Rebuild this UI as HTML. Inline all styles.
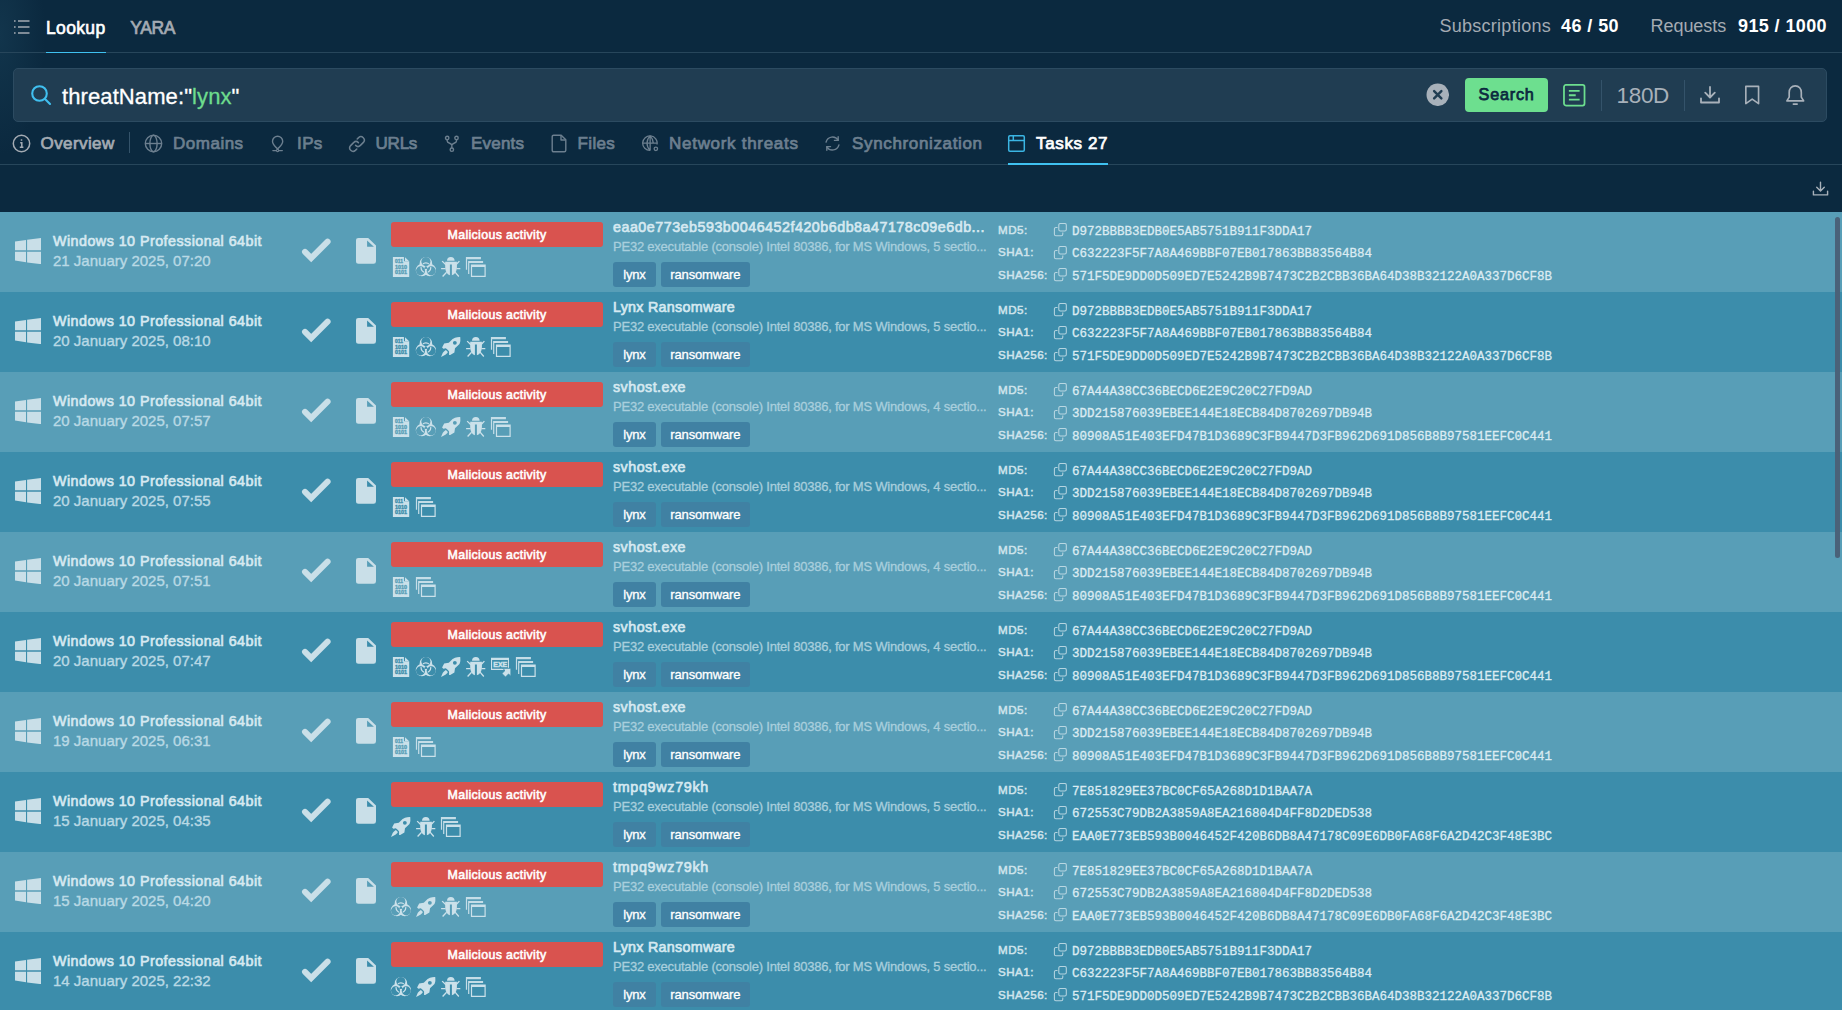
<!DOCTYPE html>
<html lang="en">
<head>
<meta charset="utf-8">
<title>Lookup</title>
<style>
*{box-sizing:border-box;margin:0;padding:0}
html,body{width:1842px;height:1010px;overflow:hidden;background:#0b293f;font-family:"Liberation Sans",sans-serif;color:#fff}
body{position:relative}
.abs{position:absolute}
/* top nav */
.nav{position:absolute;left:0;top:0;width:1842px;height:53px;border-bottom:1px solid #27465b}
.glow{position:absolute;left:0;top:0;width:80px;height:200px;background:radial-gradient(ellipse 45px 120px at 0 35px,#12354c 0,rgba(18,53,76,0) 100%)}
.nav .t{position:absolute;top:16.900px;font-size:17.500px;line-height:22px;white-space:nowrap}
.nav .lookup{left:46px;color:#fff;-webkit-text-stroke:.62px #fff;letter-spacing:0.346px}
.nav .yara{left:130.200px;color:#a4abb3;-webkit-text-stroke:.7px #a4abb3;letter-spacing:-0.340px}
.nav .ul{position:absolute;left:46px;top:51.600px;width:60px;height:1.500px;background:#3fc1f0}
.nav .r{position:absolute;top:15px;font-size:18px;line-height:22px;white-space:nowrap;color:#a4abb3}
.nav .r b{color:#fff;font-weight:bold}
/* search */
.sb{position:absolute;left:13px;top:68px;width:1814px;height:54px;background:#203d52;border:1px solid #2c4b61;border-radius:5px}
.sb .q{position:absolute;left:48px;top:13px;font-size:22px;line-height:30px;white-space:nowrap;color:#fff;-webkit-text-stroke:.3px currentColor;letter-spacing:.1px}
.sb .q span{color:#6ddc8d}
.btn{position:absolute;left:1451.300px;top:9.400px;width:82.500px;height:33.400px;border-radius:4px;background:#6ddf8f;color:#0b293f;font-size:16.2px;line-height:33.400px;text-align:center;-webkit-text-stroke:.75px #0b293f;letter-spacing:0.784px}
.sep{position:absolute;top:11px;width:1px;height:31px;background:#34536a}
.d180{position:absolute;left:1602.500px;top:12px;font-size:22.500px;line-height:30px;color:#a8b1ba;letter-spacing:-0.324px}
/* tabs */
.tabs{position:absolute;left:0;top:122px;width:1842px;height:43px;border-bottom:1px solid #27465b}
.tab{position:absolute;top:11px;font-size:17px;line-height:22px;color:#6c7f8f;-webkit-text-stroke:.72px currentColor;white-space:nowrap}
.tab.on{color:#fff}
.tabs svg{position:absolute}
.tul{position:absolute;left:1008px;top:41px;width:100px;height:2px;background:#3fc1f0}
/* rows */
.list{position:absolute;left:0;top:212px;width:1842px;height:798px;overflow:hidden}
.row{position:relative;height:80px;width:1842px;background:#589eb7;--bg:#589eb7}
.row.alt{background:#3c8dab;--bg:#3c8dab}
.row>*{position:absolute}
.wl{left:14.900px;top:26px;width:26.200px;height:26.200px}
.os{left:53px;top:19px;font-size:14.3px;line-height:20px;color:#d6e9f1;-webkit-text-stroke:.65px currentColor;letter-spacing:0.466px;white-space:nowrap}
.dt{left:53px;top:39px;font-size:15px;line-height:20px;color:#b9d9e5;-webkit-text-stroke:.38px currentColor;white-space:nowrap}
.ck{left:301px;top:25px;width:31px;height:27px}
.fl{left:356px;top:26.100px;width:20px;height:25.700px}
.verdict{left:391px;top:10px;width:212px;height:25px;border-radius:3px;background:#d9534f;color:#fff;font-size:12.4px;line-height:26.500px;-webkit-text-stroke:.55px currentColor;letter-spacing:0.335px;text-align:center}
.sis{left:391px;top:44px;height:21px;display:flex;gap:5px;align-items:flex-start}
.si{width:20px;height:21px;display:block;flex:none;overflow:visible}
.nm{left:613px;top:5px;font-size:14.3px;line-height:20px;color:#d6e9f1;-webkit-text-stroke:.65px currentColor;white-space:nowrap}
.ds{left:613px;top:27px;font-size:13px;line-height:16px;color:#a9cfdd;-webkit-text-stroke:.3px currentColor;white-space:nowrap}
.tags{left:613px;top:50px;display:flex;gap:5px}
.tag.t1{width:43px}.tag.t2{width:88.600px}
.tag{display:block;height:25px;border-radius:3px;background:#4081a3;color:#fff;font-size:13px;line-height:25px;text-align:center;-webkit-text-stroke:.3px #fff;white-space:nowrap}
.hl{left:998px;font-size:11.600px;line-height:16px;color:#cfe4ec;-webkit-text-stroke:.5px currentColor;letter-spacing:0.485px;white-space:nowrap}
.hc{left:1053px;width:15px;height:14px}
.cp{width:15px;height:14px;display:block;opacity:.85}
.hv{left:1072px;font-family:"Liberation Mono",monospace;font-size:12.5px;line-height:16px;color:#dbebf2;-webkit-text-stroke:.3px currentColor;white-space:nowrap}
.hl.h1{top:10px}.hl.h2{top:32.300px}.hl.h3{top:55.300px}
.hc.h1{top:10.500px}.hc.h2{top:33.500px}.hc.h3{top:56px}
.hv.h1{top:11.750px}.hv.h2{top:33.750px}.hv.h3{top:56.750px}
.scroll{position:absolute;left:1835px;top:217px;width:5px;height:341px;border-radius:3px;background:#4a6279}
</style>
</head>
<body>
<div class="glow"></div>
<div class="nav">
<svg class="abs" style="left:13px;top:19px" width="18" height="16" viewBox="0 0 18 16"><g stroke="#a4abb3" stroke-width="1.400" fill="none"><path d="M5 2h11.500M5 8h11.500M5 14h11.500"/><path d="M1 2h1.600M1 8h1.600M1 14h1.600"/></g></svg>
<div class="t lookup">Lookup</div>
<div class="t yara">YARA</div>
<div class="ul"></div>
<div class="r" style="left:1439.500px;letter-spacing:0.264px">Subscriptions</div>
<div class="r" style="left:1561px"><b style="letter-spacing:0.422px">46 / 50</b></div>
<div class="r" style="left:1650.500px;letter-spacing:-0.043px">Requests</div>
<div class="r" style="left:1738px"><b style="letter-spacing:0.392px">915 / 1000</b></div>
</div>

<div class="sb">
<svg class="abs" style="left:15.500px;top:15px" width="23" height="23" viewBox="0 0 23 23"><g fill="none" stroke="#40bfef" stroke-width="2.100" stroke-linecap="round"><circle cx="9.500" cy="9.500" r="7.300"/><path d="M15 15l5 5"/></g></svg>
<div class="q">threatName:"<span>lynx</span>"</div>
<svg class="abs" style="left:1411.800px;top:13.800px" width="23.500" height="23.500" viewBox="0 0 24 24"><circle cx="12" cy="12" r="11.500" fill="#a8b1ba"/><path d="M8.300 8.300l7.400 7.400M15.700 8.300l-7.400 7.400" stroke="#203d52" stroke-width="2.500" stroke-linecap="round"/></svg>
<div class="btn">Search</div>
<svg class="abs" style="left:1549px;top:15px" width="22.500" height="22.500" viewBox="0 0 23 23"><g fill="none" stroke="#6ddf8f" stroke-width="1.800"><rect x="1" y="1" width="21" height="21" rx="2"/><path d="M6 7h11M6 11.500h7M6 16h11"/></g></svg>
<div class="sep" style="left:1587px"></div>
<div class="d180">180D</div>
<div class="sep" style="left:1670px"></div>
<svg class="abs" style="left:1685.300px;top:15px" width="22" height="22" viewBox="0 0 22 22"><g fill="none" stroke="#a8b1ba" stroke-width="1.800" stroke-linecap="round" stroke-linejoin="round"><path d="M11 3v10M6.200 8.700l4.800 4.800 4.800-4.800M2 14.300v4.200h18v-4.200"/></g></svg>
<svg class="abs" style="left:1730.300px;top:16px" width="16.400" height="20" viewBox="0 0 18 22"><path fill="none" stroke="#a8b1ba" stroke-width="1.800" stroke-linejoin="round" d="M2 1.500h14v19l-7-5-7 5z"/></svg>
<svg class="abs" style="left:1771.300px;top:15.200px" width="20.500" height="22.500" viewBox="0 0 22 24"><g fill="none" stroke="#a8b1ba" stroke-width="1.800" stroke-linecap="round" stroke-linejoin="round"><path d="M11 2c-4 0-6.500 3-6.500 7v5L2 18h18l-2.500-4V9c0-4-2.500-7-6.500-7z"/><path d="M9 21.500h4"/></g></svg>
</div>

<div class="tabs">
<svg style="left:12px;top:12px" width="19" height="19" viewBox="0 0 19 19"><circle cx="9.500" cy="9.500" r="8.200" fill="none" stroke="#a4abb3" stroke-width="1.500"/><path d="M9.500 5.300v1.500M8.200 8.700h1.600v4.300M7.800 13.200h3.600" fill="none" stroke="#a4abb3" stroke-width="1.500"/></svg>
<div class="tab" style="left:40.600px;color:#a4abb3;letter-spacing:0.393px">Overview</div>
<div class="sep" style="left:129px;top:9.700px;height:21px"></div>
<svg style="left:144px;top:12px" width="19" height="19" viewBox="0 0 19 19"><g fill="none" stroke="#6c7f8f" stroke-width="1.400"><circle cx="9.500" cy="9.500" r="8.200"/><ellipse cx="9.500" cy="9.500" rx="3.600" ry="8.200"/><path d="M1.300 9.500h16.400"/></g></svg>
<div class="tab" style="left:173.100px;letter-spacing:0.487px">Domains</div>
<svg style="left:270px;top:13px" width="16" height="18" viewBox="0 0 16 18"><g fill="none" stroke="#6c7f8f" stroke-width="1.400" stroke-linecap="round"><path d="M7.600 14.200C5.600 11.700 2.500 9.600 2.500 6.300a5.100 5.100 0 0 1 10.200 0c0 3.300-3.100 5.400-5.100 7.900z"/><path d="M2.900 15.600h9.400"/><circle cx="7.600" cy="15.500" r="1.100" fill="#0b293f" stroke-width="1.100"/></g></svg>
<div class="tab" style="left:297.100px;letter-spacing:0.312px">IPs</div>
<svg style="left:348px;top:13px" width="18" height="18" viewBox="0 0 18 18"><g fill="none" stroke="#6c7f8f" stroke-width="1.500" stroke-linecap="round"><path d="M7.600 10.400a3.400 3.400 0 0 0 4.800 0l3-3a3.400 3.400 0 0 0-4.800-4.800l-1.400 1.400"/><path d="M10.400 7.600a3.400 3.400 0 0 0-4.800 0l-3 3a3.400 3.400 0 0 0 4.800 4.800l1.400-1.400"/></g></svg>
<div class="tab" style="left:375.600px;letter-spacing:-0.254px">URLs</div>
<svg style="left:444px;top:13px" width="16" height="18" viewBox="0 0 16 18"><g fill="none" stroke="#6c7f8f" stroke-width="1.400"><circle cx="3.200" cy="3" r="1.700"/><circle cx="12.500" cy="3" r="1.700"/><circle cx="7.850" cy="14.700" r="1.700"/><path d="M3.200 4.700v1.300c0 2.700 4.650 1.800 4.650 4.200V13M12.500 4.700v1.300c0 2.700-4.650 1.800-4.650 4.200"/></g></svg>
<div class="tab" style="left:471.100px;letter-spacing:0.169px">Events</div>
<svg style="left:551px;top:12px" width="17" height="19" viewBox="0 0 17 19"><g fill="none" stroke="#6c7f8f" stroke-width="1.400" stroke-linejoin="round"><path d="M2.700 1.200h7.500l4.600 4.600v10.500c0 .9-.6 1.500-1.500 1.500H2.700c-.9 0-1.500-.6-1.500-1.500V2.700c0-.9.600-1.500 1.500-1.500z"/><path d="M10 1.400v4.600h4.600"/></g></svg>
<div class="tab" style="left:577.600px;letter-spacing:0.319px">Files</div>
<svg style="left:642.100px;top:13.300px" width="17.200" height="17.200" viewBox="0 0 19 19"><g fill="none" stroke="#6c7f8f" stroke-width="1.450"><path d="M16.600 10.500A8 8 0 1 0 9 17"/><path d="M9 1c-4.600 4.500-4.600 11.500 0 16M9 1c2.300 2.300 3.400 5 3.500 8M1 9h15.500M9 1v16"/><circle cx="15.300" cy="15.300" r="1.900"/></g></svg>
<div class="tab" style="left:669.100px;letter-spacing:0.697px">Network threats</div>
<svg style="left:823.600px;top:13.300px;transform:scaleX(-1)" width="17" height="17" viewBox="0 0 18 18"><g fill="none" stroke="#6c7f8f" stroke-width="1.500" stroke-linecap="round" stroke-linejoin="round"><path d="M15.800 7.500A7 7 0 0 0 3 5.500M2.200 10.500A7 7 0 0 0 15 12.500"/><path d="M3 1.800v3.900h3.900M15 16.200v-3.900h-3.900"/></g></svg>
<div class="tab" style="left:852.100px;letter-spacing:0.635px">Synchronization</div>
<svg style="left:1007px;top:12px" width="19" height="19" viewBox="0 0 19 19"><g fill="none" stroke="#3bb5e3" stroke-width="1.500"><rect x="1.700" y="1.700" width="15.600" height="15.600" rx="1.200"/><path d="M1.700 6.500h15.600M6.300 1.700v4.800"/></g></svg>
<div class="tab on" style="left:1036.100px;letter-spacing:0.613px">Tasks 27</div>
<div class="tul"></div>
</div>

<svg class="abs" style="left:1811.500px;top:180.500px" width="17" height="15.500" viewBox="0 0 18 16"><g fill="none" stroke="#a8b1ba" stroke-width="1.500" stroke-linecap="round" stroke-linejoin="round"><path d="M9 1v9M5 6.500l4 4 4-4M1.500 10.500v4h15v-4"/></g></svg>

<div class="list">
<div class="row">
<svg class="wl" viewBox="0 0 26.200 26.200"><path fill="#c9dfe8" d="M0 3.400L11 1.900v10.400H0zM12.100 1.700L26.200 0v12.300H12.100zM0 13.700h11v10.500L0 22.600zM12.100 13.700h14.100v12.500l-14.100-1.800z"/></svg><div class="os">Windows 10 Professional 64bit</div><div class="dt">21 January 2025, 07:20</div>
<svg class="ck" viewBox="0 0 31 27"><path fill="none" stroke="#c9dfe8" stroke-width="6" stroke-linecap="round" stroke-linejoin="miter" d="M4 14.860l6.200 6.200L26.600 4.660"/></svg><svg class="fl" viewBox="0 0 20 25.700"><path fill="#c9dfe8" fill-rule="evenodd" d="M2.500 0h9.700L20 7.600v15.600a2.500 2.500 0 0 1-2.500 2.500h-15A2.500 2.500 0 0 1 0 23.200V2.500A2.500 2.500 0 0 1 2.500 0zM11.100 2.500v6.300h6.800z"/></svg>
<div class="verdict">Malicious activity</div>
<div class="sis"><svg class="si" viewBox="0 0 20 21"><path fill="#cbe1ea" d="M1.900 1h11v4.300h5.300v15.800H1.900z"/><path fill="#cbe1ea" d="M14 1.300l3.900 3.700H14z"/><g font-family="Liberation Sans,sans-serif" font-weight="bold" font-size="5.200" style="fill:var(--bg);stroke:var(--bg)" stroke-width=".35"><text x="3.900" y="7.400" textLength="8.100" lengthAdjust="spacingAndGlyphs">011</text><text x="3.900" y="12.900" textLength="12.200" lengthAdjust="spacingAndGlyphs">1010</text><text x="3.900" y="18.300" textLength="12.200" lengthAdjust="spacingAndGlyphs">0101</text></g></svg><svg class="si" viewBox="0 0 20 21"><g transform="translate(9.900 11.750) scale(.413)"><mask id="u1" maskUnits="userSpaceOnUse" x="-30" y="-30" width="60" height="60"><rect x="-30" y="-30" width="60" height="60" fill="#fff"/><g fill="#000"><circle cx="0.00" cy="-15.00" r="11"/><circle cx="-12.99" cy="7.50" r="11"/><circle cx="12.99" cy="7.50" r="11"/><circle r="3.200"/><rect x="-.8" y="-16" width="1.600" height="16" transform="rotate(0)"/><rect x="-.8" y="-16" width="1.600" height="16" transform="rotate(120)"/><rect x="-.8" y="-16" width="1.600" height="16" transform="rotate(240)"/></g></mask><clipPath id="u2"><circle cx="0.00" cy="-15.00" r="9.300"/><circle cx="-12.99" cy="7.50" r="9.300"/><circle cx="12.99" cy="7.50" r="9.300"/></clipPath><g fill="#cbe1ea" mask="url(#u1)"><circle cx="0.00" cy="-11.00" r="15"/><circle cx="-9.53" cy="5.50" r="15"/><circle cx="9.53" cy="5.50" r="15"/></g><circle r="11.750" fill="none" stroke="#cbe1ea" stroke-width="3" clip-path="url(#u2)"/></g></svg><svg class="si" viewBox="0 0 20 21"><path fill="#cbe1ea" d="M6 4.700a3.800 3.800 0 0 1 7.600 0z"/><path fill="#cbe1ea" d="M4.200 5.800h11.700V11c0 4-1.900 7.500-5 8.200V8.600h-2v10.600C6 18.500 4.200 15 4.200 11z"/><path fill="none" stroke="#cbe1ea" stroke-width="1.300" d="M4.900 8.800L1.150 5.100M14.900 8.800l3.500-3.700M4.500 12.700H.1M15.500 12.700h3.800M5.600 16.200l-4 4.300M14.100 16.200l3.700 4.300"/></svg><svg class="si" viewBox="0 0 20 21"><path fill="#cbe1ea" d="M-.1 1h15v2.300H1.100v10.500H-.1z" opacity=".95"/><path fill="#cbe1ea" d="M2.100 4.900h15v2.200H3.300v10.800H2.100z" opacity=".95"/><path fill="#cbe1ea" fill-rule="evenodd" d="M4.900 8.600h14.800V21H4.900zM6.100 11v8.800h12.400V11z"/></svg></div>
<div class="nm" style="letter-spacing:0.499px">eaa0e773eb593b0046452f420b6db8a47178c09e6db...</div>
<div class="ds" style="letter-spacing:-0.220px">PE32 executable (console) Intel 80386, for MS Windows, 5 sectio...</div>
<div class="tags"><span class="tag t1" style="letter-spacing:-0.181px">lynx</span><span class="tag t2" style="letter-spacing:-0.163px">ransomware</span></div>
<div class="hl h1">MD5:</div><div class="hl h2">SHA1:</div><div class="hl h3">SHA256:</div>
<div class="hc h1"><svg class="cp" viewBox="0 0 15 14"><g fill="none" stroke="#cbe1ea" stroke-width="1.050"><rect x="5.800" y=".5" width="7.500" height="7.500" rx="1.500"/><path d="M4.500 4.400H2.900c-.8 0-1.500.7-1.500 1.500v5.400c0 .8.700 1.500 1.500 1.500h5.400c.8 0 1.500-.7 1.500-1.500V9.400"/></g></svg></div><div class="hc h2"><svg class="cp" viewBox="0 0 15 14"><g fill="none" stroke="#cbe1ea" stroke-width="1.050"><rect x="5.800" y=".5" width="7.500" height="7.500" rx="1.500"/><path d="M4.500 4.400H2.900c-.8 0-1.500.7-1.500 1.500v5.400c0 .8.700 1.500 1.500 1.500h5.400c.8 0 1.500-.7 1.500-1.500V9.400"/></g></svg></div><div class="hc h3"><svg class="cp" viewBox="0 0 15 14"><g fill="none" stroke="#cbe1ea" stroke-width="1.050"><rect x="5.800" y=".5" width="7.500" height="7.500" rx="1.500"/><path d="M4.500 4.400H2.900c-.8 0-1.500.7-1.500 1.500v5.400c0 .8.700 1.500 1.500 1.500h5.400c.8 0 1.500-.7 1.500-1.500V9.400"/></g></svg></div>
<div class="hv h1">D972BBBB3EDB0E5AB5751B911F3DDA17</div><div class="hv h2">C632223F5F7A8A469BBF07EB017863BB83564B84</div><div class="hv h3">571F5DE9DD0D509ED7E5242B9B7473C2B2CBB36BA64D38B32122A0A337D6CF8B</div>
</div>
<div class="row alt">
<svg class="wl" viewBox="0 0 26.200 26.200"><path fill="#c9dfe8" d="M0 3.400L11 1.900v10.400H0zM12.100 1.700L26.200 0v12.300H12.100zM0 13.700h11v10.500L0 22.600zM12.100 13.700h14.100v12.500l-14.100-1.800z"/></svg><div class="os">Windows 10 Professional 64bit</div><div class="dt">20 January 2025, 08:10</div>
<svg class="ck" viewBox="0 0 31 27"><path fill="none" stroke="#c9dfe8" stroke-width="6" stroke-linecap="round" stroke-linejoin="miter" d="M4 14.860l6.200 6.200L26.600 4.660"/></svg><svg class="fl" viewBox="0 0 20 25.700"><path fill="#c9dfe8" fill-rule="evenodd" d="M2.500 0h9.700L20 7.600v15.600a2.500 2.500 0 0 1-2.500 2.500h-15A2.500 2.500 0 0 1 0 23.200V2.500A2.500 2.500 0 0 1 2.500 0zM11.100 2.500v6.300h6.800z"/></svg>
<div class="verdict">Malicious activity</div>
<div class="sis"><svg class="si" viewBox="0 0 20 21"><path fill="#cbe1ea" d="M1.900 1h11v4.300h5.300v15.800H1.900z"/><path fill="#cbe1ea" d="M14 1.300l3.900 3.700H14z"/><g font-family="Liberation Sans,sans-serif" font-weight="bold" font-size="5.200" style="fill:var(--bg);stroke:var(--bg)" stroke-width=".35"><text x="3.900" y="7.400" textLength="8.100" lengthAdjust="spacingAndGlyphs">011</text><text x="3.900" y="12.900" textLength="12.200" lengthAdjust="spacingAndGlyphs">1010</text><text x="3.900" y="18.300" textLength="12.200" lengthAdjust="spacingAndGlyphs">0101</text></g></svg><svg class="si" viewBox="0 0 20 21"><g transform="translate(9.900 11.750) scale(.413)"><mask id="u3" maskUnits="userSpaceOnUse" x="-30" y="-30" width="60" height="60"><rect x="-30" y="-30" width="60" height="60" fill="#fff"/><g fill="#000"><circle cx="0.00" cy="-15.00" r="11"/><circle cx="-12.99" cy="7.50" r="11"/><circle cx="12.99" cy="7.50" r="11"/><circle r="3.200"/><rect x="-.8" y="-16" width="1.600" height="16" transform="rotate(0)"/><rect x="-.8" y="-16" width="1.600" height="16" transform="rotate(120)"/><rect x="-.8" y="-16" width="1.600" height="16" transform="rotate(240)"/></g></mask><clipPath id="u4"><circle cx="0.00" cy="-15.00" r="9.300"/><circle cx="-12.99" cy="7.50" r="9.300"/><circle cx="12.99" cy="7.50" r="9.300"/></clipPath><g fill="#cbe1ea" mask="url(#u3)"><circle cx="0.00" cy="-11.00" r="15"/><circle cx="-9.53" cy="5.50" r="15"/><circle cx="9.53" cy="5.50" r="15"/></g><circle r="11.750" fill="none" stroke="#cbe1ea" stroke-width="3" clip-path="url(#u4)"/></g></svg><svg class="si" viewBox="0 0 20 21"><path fill="#cbe1ea" fill-rule="evenodd" d="M19.200 1.050C17.500 1 15.500 1.200 14 1.640 13 2 12.300 2.500 11.600 3.100L7.770 6.840l-4.600.6L1.090 11.440 2.400 12.800l2.400-.6 2.100 1.900 1.170 1.500v3.300l1.180.1 4.150-2.500.6-4.200 4.500-4.400c.7-1.400 1-3.400.85-4.500.05-.9-.05-1.700-.15-2.350zM15.790 6.840a1.930 1.930 0 1 0-3.860 0 1.930 1.930 0 1 0 3.860 0z"/><path fill="#cbe1ea" d="M4.900 13.900C3.500 14.800 2.300 16 1.700 17L.05 20.950 3.900 19c1.100-.7 2.300-1.800 3-3z"/></svg><svg class="si" viewBox="0 0 20 21"><path fill="#cbe1ea" d="M6 4.700a3.800 3.800 0 0 1 7.600 0z"/><path fill="#cbe1ea" d="M4.200 5.800h11.700V11c0 4-1.900 7.500-5 8.200V8.600h-2v10.600C6 18.500 4.200 15 4.200 11z"/><path fill="none" stroke="#cbe1ea" stroke-width="1.300" d="M4.900 8.800L1.150 5.100M14.900 8.800l3.500-3.700M4.500 12.700H.1M15.500 12.700h3.800M5.600 16.200l-4 4.300M14.100 16.200l3.700 4.300"/></svg><svg class="si" viewBox="0 0 20 21"><path fill="#cbe1ea" d="M-.1 1h15v2.300H1.100v10.500H-.1z" opacity=".95"/><path fill="#cbe1ea" d="M2.100 4.900h15v2.200H3.300v10.800H2.100z" opacity=".95"/><path fill="#cbe1ea" fill-rule="evenodd" d="M4.900 8.600h14.800V21H4.900zM6.100 11v8.800h12.400V11z"/></svg></div>
<div class="nm" style="letter-spacing:0.275px">Lynx Ransomware</div>
<div class="ds" style="letter-spacing:-0.220px">PE32 executable (console) Intel 80386, for MS Windows, 5 sectio...</div>
<div class="tags"><span class="tag t1" style="letter-spacing:-0.181px">lynx</span><span class="tag t2" style="letter-spacing:-0.163px">ransomware</span></div>
<div class="hl h1">MD5:</div><div class="hl h2">SHA1:</div><div class="hl h3">SHA256:</div>
<div class="hc h1"><svg class="cp" viewBox="0 0 15 14"><g fill="none" stroke="#cbe1ea" stroke-width="1.050"><rect x="5.800" y=".5" width="7.500" height="7.500" rx="1.500"/><path d="M4.500 4.400H2.900c-.8 0-1.500.7-1.500 1.500v5.400c0 .8.700 1.500 1.500 1.500h5.400c.8 0 1.500-.7 1.500-1.500V9.400"/></g></svg></div><div class="hc h2"><svg class="cp" viewBox="0 0 15 14"><g fill="none" stroke="#cbe1ea" stroke-width="1.050"><rect x="5.800" y=".5" width="7.500" height="7.500" rx="1.500"/><path d="M4.500 4.400H2.900c-.8 0-1.500.7-1.500 1.500v5.400c0 .8.700 1.500 1.500 1.500h5.400c.8 0 1.500-.7 1.500-1.500V9.400"/></g></svg></div><div class="hc h3"><svg class="cp" viewBox="0 0 15 14"><g fill="none" stroke="#cbe1ea" stroke-width="1.050"><rect x="5.800" y=".5" width="7.500" height="7.500" rx="1.500"/><path d="M4.500 4.400H2.900c-.8 0-1.500.7-1.500 1.500v5.400c0 .8.700 1.500 1.500 1.500h5.400c.8 0 1.500-.7 1.500-1.500V9.400"/></g></svg></div>
<div class="hv h1">D972BBBB3EDB0E5AB5751B911F3DDA17</div><div class="hv h2">C632223F5F7A8A469BBF07EB017863BB83564B84</div><div class="hv h3">571F5DE9DD0D509ED7E5242B9B7473C2B2CBB36BA64D38B32122A0A337D6CF8B</div>
</div>
<div class="row">
<svg class="wl" viewBox="0 0 26.200 26.200"><path fill="#c9dfe8" d="M0 3.400L11 1.900v10.400H0zM12.100 1.700L26.200 0v12.300H12.100zM0 13.700h11v10.500L0 22.600zM12.100 13.700h14.100v12.500l-14.100-1.800z"/></svg><div class="os">Windows 10 Professional 64bit</div><div class="dt">20 January 2025, 07:57</div>
<svg class="ck" viewBox="0 0 31 27"><path fill="none" stroke="#c9dfe8" stroke-width="6" stroke-linecap="round" stroke-linejoin="miter" d="M4 14.860l6.200 6.200L26.600 4.660"/></svg><svg class="fl" viewBox="0 0 20 25.700"><path fill="#c9dfe8" fill-rule="evenodd" d="M2.500 0h9.700L20 7.600v15.600a2.500 2.500 0 0 1-2.500 2.500h-15A2.500 2.500 0 0 1 0 23.200V2.500A2.500 2.500 0 0 1 2.500 0zM11.100 2.500v6.300h6.800z"/></svg>
<div class="verdict">Malicious activity</div>
<div class="sis"><svg class="si" viewBox="0 0 20 21"><path fill="#cbe1ea" d="M1.900 1h11v4.300h5.300v15.800H1.900z"/><path fill="#cbe1ea" d="M14 1.300l3.900 3.700H14z"/><g font-family="Liberation Sans,sans-serif" font-weight="bold" font-size="5.200" style="fill:var(--bg);stroke:var(--bg)" stroke-width=".35"><text x="3.900" y="7.400" textLength="8.100" lengthAdjust="spacingAndGlyphs">011</text><text x="3.900" y="12.900" textLength="12.200" lengthAdjust="spacingAndGlyphs">1010</text><text x="3.900" y="18.300" textLength="12.200" lengthAdjust="spacingAndGlyphs">0101</text></g></svg><svg class="si" viewBox="0 0 20 21"><g transform="translate(9.900 11.750) scale(.413)"><mask id="u5" maskUnits="userSpaceOnUse" x="-30" y="-30" width="60" height="60"><rect x="-30" y="-30" width="60" height="60" fill="#fff"/><g fill="#000"><circle cx="0.00" cy="-15.00" r="11"/><circle cx="-12.99" cy="7.50" r="11"/><circle cx="12.99" cy="7.50" r="11"/><circle r="3.200"/><rect x="-.8" y="-16" width="1.600" height="16" transform="rotate(0)"/><rect x="-.8" y="-16" width="1.600" height="16" transform="rotate(120)"/><rect x="-.8" y="-16" width="1.600" height="16" transform="rotate(240)"/></g></mask><clipPath id="u6"><circle cx="0.00" cy="-15.00" r="9.300"/><circle cx="-12.99" cy="7.50" r="9.300"/><circle cx="12.99" cy="7.50" r="9.300"/></clipPath><g fill="#cbe1ea" mask="url(#u5)"><circle cx="0.00" cy="-11.00" r="15"/><circle cx="-9.53" cy="5.50" r="15"/><circle cx="9.53" cy="5.50" r="15"/></g><circle r="11.750" fill="none" stroke="#cbe1ea" stroke-width="3" clip-path="url(#u6)"/></g></svg><svg class="si" viewBox="0 0 20 21"><path fill="#cbe1ea" fill-rule="evenodd" d="M19.200 1.050C17.500 1 15.500 1.200 14 1.640 13 2 12.300 2.500 11.600 3.100L7.770 6.840l-4.600.6L1.090 11.440 2.400 12.800l2.400-.6 2.100 1.900 1.170 1.500v3.300l1.180.1 4.150-2.500.6-4.200 4.500-4.400c.7-1.400 1-3.400.85-4.500.05-.9-.05-1.700-.15-2.350zM15.790 6.840a1.930 1.930 0 1 0-3.860 0 1.930 1.930 0 1 0 3.860 0z"/><path fill="#cbe1ea" d="M4.900 13.900C3.500 14.800 2.300 16 1.700 17L.05 20.950 3.900 19c1.100-.7 2.300-1.800 3-3z"/></svg><svg class="si" viewBox="0 0 20 21"><path fill="#cbe1ea" d="M6 4.700a3.800 3.800 0 0 1 7.600 0z"/><path fill="#cbe1ea" d="M4.200 5.800h11.700V11c0 4-1.900 7.500-5 8.200V8.600h-2v10.600C6 18.500 4.200 15 4.200 11z"/><path fill="none" stroke="#cbe1ea" stroke-width="1.300" d="M4.900 8.800L1.150 5.100M14.900 8.800l3.500-3.700M4.500 12.700H.1M15.500 12.700h3.800M5.600 16.200l-4 4.300M14.100 16.200l3.700 4.300"/></svg><svg class="si" viewBox="0 0 20 21"><path fill="#cbe1ea" d="M-.1 1h15v2.300H1.100v10.500H-.1z" opacity=".95"/><path fill="#cbe1ea" d="M2.100 4.900h15v2.200H3.300v10.800H2.100z" opacity=".95"/><path fill="#cbe1ea" fill-rule="evenodd" d="M4.900 8.600h14.800V21H4.900zM6.100 11v8.800h12.400V11z"/></svg></div>
<div class="nm" style="letter-spacing:0.466px">svhost.exe</div>
<div class="ds" style="letter-spacing:-0.220px">PE32 executable (console) Intel 80386, for MS Windows, 4 sectio...</div>
<div class="tags"><span class="tag t1" style="letter-spacing:-0.181px">lynx</span><span class="tag t2" style="letter-spacing:-0.163px">ransomware</span></div>
<div class="hl h1">MD5:</div><div class="hl h2">SHA1:</div><div class="hl h3">SHA256:</div>
<div class="hc h1"><svg class="cp" viewBox="0 0 15 14"><g fill="none" stroke="#cbe1ea" stroke-width="1.050"><rect x="5.800" y=".5" width="7.500" height="7.500" rx="1.500"/><path d="M4.500 4.400H2.900c-.8 0-1.500.7-1.500 1.500v5.400c0 .8.700 1.500 1.500 1.500h5.400c.8 0 1.500-.7 1.500-1.500V9.400"/></g></svg></div><div class="hc h2"><svg class="cp" viewBox="0 0 15 14"><g fill="none" stroke="#cbe1ea" stroke-width="1.050"><rect x="5.800" y=".5" width="7.500" height="7.500" rx="1.500"/><path d="M4.500 4.400H2.900c-.8 0-1.500.7-1.500 1.500v5.400c0 .8.700 1.500 1.500 1.500h5.400c.8 0 1.500-.7 1.500-1.500V9.400"/></g></svg></div><div class="hc h3"><svg class="cp" viewBox="0 0 15 14"><g fill="none" stroke="#cbe1ea" stroke-width="1.050"><rect x="5.800" y=".5" width="7.500" height="7.500" rx="1.500"/><path d="M4.500 4.400H2.900c-.8 0-1.500.7-1.500 1.500v5.400c0 .8.700 1.500 1.500 1.500h5.400c.8 0 1.500-.7 1.500-1.500V9.400"/></g></svg></div>
<div class="hv h1">67A44A38CC36BECD6E2E9C20C27FD9AD</div><div class="hv h2">3DD215876039EBEE144E18ECB84D8702697DB94B</div><div class="hv h3">80908A51E403EFD47B1D3689C3FB9447D3FB962D691D856B8B97581EEFC0C441</div>
</div>
<div class="row alt">
<svg class="wl" viewBox="0 0 26.200 26.200"><path fill="#c9dfe8" d="M0 3.400L11 1.900v10.400H0zM12.100 1.700L26.200 0v12.300H12.100zM0 13.700h11v10.500L0 22.600zM12.100 13.700h14.100v12.500l-14.100-1.800z"/></svg><div class="os">Windows 10 Professional 64bit</div><div class="dt">20 January 2025, 07:55</div>
<svg class="ck" viewBox="0 0 31 27"><path fill="none" stroke="#c9dfe8" stroke-width="6" stroke-linecap="round" stroke-linejoin="miter" d="M4 14.860l6.200 6.200L26.600 4.660"/></svg><svg class="fl" viewBox="0 0 20 25.700"><path fill="#c9dfe8" fill-rule="evenodd" d="M2.500 0h9.700L20 7.600v15.600a2.500 2.500 0 0 1-2.500 2.500h-15A2.500 2.500 0 0 1 0 23.200V2.500A2.500 2.500 0 0 1 2.500 0zM11.100 2.500v6.300h6.800z"/></svg>
<div class="verdict">Malicious activity</div>
<div class="sis"><svg class="si" viewBox="0 0 20 21"><path fill="#cbe1ea" d="M1.900 1h11v4.300h5.300v15.800H1.900z"/><path fill="#cbe1ea" d="M14 1.300l3.900 3.700H14z"/><g font-family="Liberation Sans,sans-serif" font-weight="bold" font-size="5.200" style="fill:var(--bg);stroke:var(--bg)" stroke-width=".35"><text x="3.900" y="7.400" textLength="8.100" lengthAdjust="spacingAndGlyphs">011</text><text x="3.900" y="12.900" textLength="12.200" lengthAdjust="spacingAndGlyphs">1010</text><text x="3.900" y="18.300" textLength="12.200" lengthAdjust="spacingAndGlyphs">0101</text></g></svg><svg class="si" viewBox="0 0 20 21"><path fill="#cbe1ea" d="M-.1 1h15v2.300H1.100v10.500H-.1z" opacity=".95"/><path fill="#cbe1ea" d="M2.100 4.900h15v2.200H3.300v10.800H2.100z" opacity=".95"/><path fill="#cbe1ea" fill-rule="evenodd" d="M4.900 8.600h14.800V21H4.900zM6.100 11v8.800h12.400V11z"/></svg></div>
<div class="nm" style="letter-spacing:0.466px">svhost.exe</div>
<div class="ds" style="letter-spacing:-0.220px">PE32 executable (console) Intel 80386, for MS Windows, 4 sectio...</div>
<div class="tags"><span class="tag t1" style="letter-spacing:-0.181px">lynx</span><span class="tag t2" style="letter-spacing:-0.163px">ransomware</span></div>
<div class="hl h1">MD5:</div><div class="hl h2">SHA1:</div><div class="hl h3">SHA256:</div>
<div class="hc h1"><svg class="cp" viewBox="0 0 15 14"><g fill="none" stroke="#cbe1ea" stroke-width="1.050"><rect x="5.800" y=".5" width="7.500" height="7.500" rx="1.500"/><path d="M4.500 4.400H2.900c-.8 0-1.500.7-1.500 1.500v5.400c0 .8.700 1.500 1.500 1.500h5.400c.8 0 1.500-.7 1.500-1.500V9.400"/></g></svg></div><div class="hc h2"><svg class="cp" viewBox="0 0 15 14"><g fill="none" stroke="#cbe1ea" stroke-width="1.050"><rect x="5.800" y=".5" width="7.500" height="7.500" rx="1.500"/><path d="M4.500 4.400H2.900c-.8 0-1.500.7-1.500 1.500v5.400c0 .8.700 1.500 1.500 1.500h5.400c.8 0 1.500-.7 1.500-1.500V9.400"/></g></svg></div><div class="hc h3"><svg class="cp" viewBox="0 0 15 14"><g fill="none" stroke="#cbe1ea" stroke-width="1.050"><rect x="5.800" y=".5" width="7.500" height="7.500" rx="1.500"/><path d="M4.500 4.400H2.900c-.8 0-1.500.7-1.500 1.500v5.400c0 .8.700 1.500 1.500 1.500h5.400c.8 0 1.500-.7 1.500-1.500V9.400"/></g></svg></div>
<div class="hv h1">67A44A38CC36BECD6E2E9C20C27FD9AD</div><div class="hv h2">3DD215876039EBEE144E18ECB84D8702697DB94B</div><div class="hv h3">80908A51E403EFD47B1D3689C3FB9447D3FB962D691D856B8B97581EEFC0C441</div>
</div>
<div class="row">
<svg class="wl" viewBox="0 0 26.200 26.200"><path fill="#c9dfe8" d="M0 3.400L11 1.900v10.400H0zM12.100 1.700L26.200 0v12.300H12.100zM0 13.700h11v10.500L0 22.600zM12.100 13.700h14.100v12.500l-14.100-1.800z"/></svg><div class="os">Windows 10 Professional 64bit</div><div class="dt">20 January 2025, 07:51</div>
<svg class="ck" viewBox="0 0 31 27"><path fill="none" stroke="#c9dfe8" stroke-width="6" stroke-linecap="round" stroke-linejoin="miter" d="M4 14.860l6.200 6.200L26.600 4.660"/></svg><svg class="fl" viewBox="0 0 20 25.700"><path fill="#c9dfe8" fill-rule="evenodd" d="M2.500 0h9.700L20 7.600v15.600a2.500 2.500 0 0 1-2.500 2.500h-15A2.500 2.500 0 0 1 0 23.200V2.500A2.500 2.500 0 0 1 2.500 0zM11.100 2.500v6.300h6.800z"/></svg>
<div class="verdict">Malicious activity</div>
<div class="sis"><svg class="si" viewBox="0 0 20 21"><path fill="#cbe1ea" d="M1.900 1h11v4.300h5.300v15.800H1.900z"/><path fill="#cbe1ea" d="M14 1.300l3.900 3.700H14z"/><g font-family="Liberation Sans,sans-serif" font-weight="bold" font-size="5.200" style="fill:var(--bg);stroke:var(--bg)" stroke-width=".35"><text x="3.900" y="7.400" textLength="8.100" lengthAdjust="spacingAndGlyphs">011</text><text x="3.900" y="12.900" textLength="12.200" lengthAdjust="spacingAndGlyphs">1010</text><text x="3.900" y="18.300" textLength="12.200" lengthAdjust="spacingAndGlyphs">0101</text></g></svg><svg class="si" viewBox="0 0 20 21"><path fill="#cbe1ea" d="M-.1 1h15v2.300H1.100v10.500H-.1z" opacity=".95"/><path fill="#cbe1ea" d="M2.100 4.900h15v2.200H3.300v10.800H2.100z" opacity=".95"/><path fill="#cbe1ea" fill-rule="evenodd" d="M4.900 8.600h14.800V21H4.900zM6.100 11v8.800h12.400V11z"/></svg></div>
<div class="nm" style="letter-spacing:0.466px">svhost.exe</div>
<div class="ds" style="letter-spacing:-0.220px">PE32 executable (console) Intel 80386, for MS Windows, 4 sectio...</div>
<div class="tags"><span class="tag t1" style="letter-spacing:-0.181px">lynx</span><span class="tag t2" style="letter-spacing:-0.163px">ransomware</span></div>
<div class="hl h1">MD5:</div><div class="hl h2">SHA1:</div><div class="hl h3">SHA256:</div>
<div class="hc h1"><svg class="cp" viewBox="0 0 15 14"><g fill="none" stroke="#cbe1ea" stroke-width="1.050"><rect x="5.800" y=".5" width="7.500" height="7.500" rx="1.500"/><path d="M4.500 4.400H2.900c-.8 0-1.500.7-1.500 1.500v5.400c0 .8.700 1.500 1.500 1.500h5.400c.8 0 1.500-.7 1.500-1.500V9.400"/></g></svg></div><div class="hc h2"><svg class="cp" viewBox="0 0 15 14"><g fill="none" stroke="#cbe1ea" stroke-width="1.050"><rect x="5.800" y=".5" width="7.500" height="7.500" rx="1.500"/><path d="M4.500 4.400H2.900c-.8 0-1.500.7-1.500 1.500v5.400c0 .8.700 1.500 1.500 1.500h5.400c.8 0 1.500-.7 1.500-1.500V9.400"/></g></svg></div><div class="hc h3"><svg class="cp" viewBox="0 0 15 14"><g fill="none" stroke="#cbe1ea" stroke-width="1.050"><rect x="5.800" y=".5" width="7.500" height="7.500" rx="1.500"/><path d="M4.500 4.400H2.900c-.8 0-1.500.7-1.500 1.500v5.400c0 .8.700 1.500 1.500 1.500h5.400c.8 0 1.500-.7 1.500-1.500V9.400"/></g></svg></div>
<div class="hv h1">67A44A38CC36BECD6E2E9C20C27FD9AD</div><div class="hv h2">3DD215876039EBEE144E18ECB84D8702697DB94B</div><div class="hv h3">80908A51E403EFD47B1D3689C3FB9447D3FB962D691D856B8B97581EEFC0C441</div>
</div>
<div class="row alt">
<svg class="wl" viewBox="0 0 26.200 26.200"><path fill="#c9dfe8" d="M0 3.400L11 1.900v10.400H0zM12.100 1.700L26.200 0v12.300H12.100zM0 13.700h11v10.500L0 22.600zM12.100 13.700h14.100v12.500l-14.100-1.800z"/></svg><div class="os">Windows 10 Professional 64bit</div><div class="dt">20 January 2025, 07:47</div>
<svg class="ck" viewBox="0 0 31 27"><path fill="none" stroke="#c9dfe8" stroke-width="6" stroke-linecap="round" stroke-linejoin="miter" d="M4 14.860l6.200 6.200L26.600 4.660"/></svg><svg class="fl" viewBox="0 0 20 25.700"><path fill="#c9dfe8" fill-rule="evenodd" d="M2.500 0h9.700L20 7.600v15.600a2.500 2.500 0 0 1-2.500 2.500h-15A2.500 2.500 0 0 1 0 23.200V2.500A2.500 2.500 0 0 1 2.500 0zM11.100 2.500v6.300h6.800z"/></svg>
<div class="verdict">Malicious activity</div>
<div class="sis"><svg class="si" viewBox="0 0 20 21"><path fill="#cbe1ea" d="M1.900 1h11v4.300h5.300v15.800H1.900z"/><path fill="#cbe1ea" d="M14 1.300l3.900 3.700H14z"/><g font-family="Liberation Sans,sans-serif" font-weight="bold" font-size="5.200" style="fill:var(--bg);stroke:var(--bg)" stroke-width=".35"><text x="3.900" y="7.400" textLength="8.100" lengthAdjust="spacingAndGlyphs">011</text><text x="3.900" y="12.900" textLength="12.200" lengthAdjust="spacingAndGlyphs">1010</text><text x="3.900" y="18.300" textLength="12.200" lengthAdjust="spacingAndGlyphs">0101</text></g></svg><svg class="si" viewBox="0 0 20 21"><g transform="translate(9.900 11.750) scale(.413)"><mask id="u7" maskUnits="userSpaceOnUse" x="-30" y="-30" width="60" height="60"><rect x="-30" y="-30" width="60" height="60" fill="#fff"/><g fill="#000"><circle cx="0.00" cy="-15.00" r="11"/><circle cx="-12.99" cy="7.50" r="11"/><circle cx="12.99" cy="7.50" r="11"/><circle r="3.200"/><rect x="-.8" y="-16" width="1.600" height="16" transform="rotate(0)"/><rect x="-.8" y="-16" width="1.600" height="16" transform="rotate(120)"/><rect x="-.8" y="-16" width="1.600" height="16" transform="rotate(240)"/></g></mask><clipPath id="u8"><circle cx="0.00" cy="-15.00" r="9.300"/><circle cx="-12.99" cy="7.50" r="9.300"/><circle cx="12.99" cy="7.50" r="9.300"/></clipPath><g fill="#cbe1ea" mask="url(#u7)"><circle cx="0.00" cy="-11.00" r="15"/><circle cx="-9.53" cy="5.50" r="15"/><circle cx="9.53" cy="5.50" r="15"/></g><circle r="11.750" fill="none" stroke="#cbe1ea" stroke-width="3" clip-path="url(#u8)"/></g></svg><svg class="si" viewBox="0 0 20 21"><path fill="#cbe1ea" fill-rule="evenodd" d="M19.200 1.050C17.500 1 15.500 1.200 14 1.640 13 2 12.300 2.500 11.600 3.100L7.770 6.840l-4.600.6L1.090 11.440 2.400 12.800l2.400-.6 2.100 1.900 1.170 1.500v3.300l1.180.1 4.150-2.500.6-4.200 4.500-4.400c.7-1.400 1-3.400.85-4.500.05-.9-.05-1.700-.15-2.350zM15.790 6.840a1.930 1.930 0 1 0-3.860 0 1.930 1.930 0 1 0 3.860 0z"/><path fill="#cbe1ea" d="M4.900 13.900C3.500 14.800 2.300 16 1.700 17L.05 20.950 3.900 19c1.100-.7 2.300-1.800 3-3z"/></svg><svg class="si" viewBox="0 0 20 21"><path fill="#cbe1ea" d="M6 4.700a3.800 3.800 0 0 1 7.600 0z"/><path fill="#cbe1ea" d="M4.200 5.800h11.700V11c0 4-1.900 7.500-5 8.200V8.600h-2v10.600C6 18.500 4.200 15 4.200 11z"/><path fill="none" stroke="#cbe1ea" stroke-width="1.300" d="M4.900 8.800L1.150 5.100M14.900 8.800l3.500-3.700M4.500 12.700H.1M15.500 12.700h3.800M5.600 16.200l-4 4.300M14.100 16.200l3.700 4.300"/></svg><svg class="si" viewBox="0 0 20 21"><path fill="#cbe1ea" fill-rule="evenodd" d="M0 1.650h18V13.900H0zM1.100 3.900v8.900h15.800V3.900z"/><text x="2.300" y="10.900" font-family="Liberation Sans,sans-serif" font-weight="bold" font-size="6.800" fill="#cbe1ea" stroke="#cbe1ea" stroke-width=".45" textLength="13.800" lengthAdjust="spacingAndGlyphs">EXE</text><path fill="#cbe1ea" style="stroke:var(--bg)" stroke-width=".9" d="M19.900 12.300h-8.300l2.400 2.150-3.100 3.050 3.600 3.600 3.050-3.100 2.350 2.300z"/></svg><svg class="si" viewBox="0 0 20 21"><path fill="#cbe1ea" d="M-.1 1h15v2.300H1.100v10.500H-.1z" opacity=".95"/><path fill="#cbe1ea" d="M2.100 4.900h15v2.200H3.300v10.800H2.100z" opacity=".95"/><path fill="#cbe1ea" fill-rule="evenodd" d="M4.900 8.600h14.800V21H4.900zM6.100 11v8.800h12.400V11z"/></svg></div>
<div class="nm" style="letter-spacing:0.466px">svhost.exe</div>
<div class="ds" style="letter-spacing:-0.220px">PE32 executable (console) Intel 80386, for MS Windows, 4 sectio...</div>
<div class="tags"><span class="tag t1" style="letter-spacing:-0.181px">lynx</span><span class="tag t2" style="letter-spacing:-0.163px">ransomware</span></div>
<div class="hl h1">MD5:</div><div class="hl h2">SHA1:</div><div class="hl h3">SHA256:</div>
<div class="hc h1"><svg class="cp" viewBox="0 0 15 14"><g fill="none" stroke="#cbe1ea" stroke-width="1.050"><rect x="5.800" y=".5" width="7.500" height="7.500" rx="1.500"/><path d="M4.500 4.400H2.900c-.8 0-1.500.7-1.500 1.500v5.400c0 .8.700 1.500 1.500 1.500h5.400c.8 0 1.500-.7 1.500-1.500V9.400"/></g></svg></div><div class="hc h2"><svg class="cp" viewBox="0 0 15 14"><g fill="none" stroke="#cbe1ea" stroke-width="1.050"><rect x="5.800" y=".5" width="7.500" height="7.500" rx="1.500"/><path d="M4.500 4.400H2.900c-.8 0-1.500.7-1.500 1.500v5.400c0 .8.700 1.500 1.500 1.500h5.400c.8 0 1.500-.7 1.500-1.500V9.400"/></g></svg></div><div class="hc h3"><svg class="cp" viewBox="0 0 15 14"><g fill="none" stroke="#cbe1ea" stroke-width="1.050"><rect x="5.800" y=".5" width="7.500" height="7.500" rx="1.500"/><path d="M4.500 4.400H2.900c-.8 0-1.500.7-1.500 1.500v5.400c0 .8.700 1.500 1.500 1.500h5.400c.8 0 1.500-.7 1.500-1.500V9.400"/></g></svg></div>
<div class="hv h1">67A44A38CC36BECD6E2E9C20C27FD9AD</div><div class="hv h2">3DD215876039EBEE144E18ECB84D8702697DB94B</div><div class="hv h3">80908A51E403EFD47B1D3689C3FB9447D3FB962D691D856B8B97581EEFC0C441</div>
</div>
<div class="row">
<svg class="wl" viewBox="0 0 26.200 26.200"><path fill="#c9dfe8" d="M0 3.400L11 1.900v10.400H0zM12.100 1.700L26.200 0v12.300H12.100zM0 13.700h11v10.500L0 22.600zM12.100 13.700h14.100v12.500l-14.100-1.800z"/></svg><div class="os">Windows 10 Professional 64bit</div><div class="dt">19 January 2025, 06:31</div>
<svg class="ck" viewBox="0 0 31 27"><path fill="none" stroke="#c9dfe8" stroke-width="6" stroke-linecap="round" stroke-linejoin="miter" d="M4 14.860l6.200 6.200L26.600 4.660"/></svg><svg class="fl" viewBox="0 0 20 25.700"><path fill="#c9dfe8" fill-rule="evenodd" d="M2.500 0h9.700L20 7.600v15.600a2.500 2.500 0 0 1-2.500 2.500h-15A2.500 2.500 0 0 1 0 23.200V2.500A2.500 2.500 0 0 1 2.500 0zM11.100 2.500v6.300h6.800z"/></svg>
<div class="verdict">Malicious activity</div>
<div class="sis"><svg class="si" viewBox="0 0 20 21"><path fill="#cbe1ea" d="M1.900 1h11v4.300h5.300v15.800H1.900z"/><path fill="#cbe1ea" d="M14 1.300l3.900 3.700H14z"/><g font-family="Liberation Sans,sans-serif" font-weight="bold" font-size="5.200" style="fill:var(--bg);stroke:var(--bg)" stroke-width=".35"><text x="3.900" y="7.400" textLength="8.100" lengthAdjust="spacingAndGlyphs">011</text><text x="3.900" y="12.900" textLength="12.200" lengthAdjust="spacingAndGlyphs">1010</text><text x="3.900" y="18.300" textLength="12.200" lengthAdjust="spacingAndGlyphs">0101</text></g></svg><svg class="si" viewBox="0 0 20 21"><path fill="#cbe1ea" d="M-.1 1h15v2.300H1.100v10.500H-.1z" opacity=".95"/><path fill="#cbe1ea" d="M2.100 4.900h15v2.200H3.300v10.800H2.100z" opacity=".95"/><path fill="#cbe1ea" fill-rule="evenodd" d="M4.900 8.600h14.800V21H4.900zM6.100 11v8.800h12.400V11z"/></svg></div>
<div class="nm" style="letter-spacing:0.466px">svhost.exe</div>
<div class="ds" style="letter-spacing:-0.220px">PE32 executable (console) Intel 80386, for MS Windows, 4 sectio...</div>
<div class="tags"><span class="tag t1" style="letter-spacing:-0.181px">lynx</span><span class="tag t2" style="letter-spacing:-0.163px">ransomware</span></div>
<div class="hl h1">MD5:</div><div class="hl h2">SHA1:</div><div class="hl h3">SHA256:</div>
<div class="hc h1"><svg class="cp" viewBox="0 0 15 14"><g fill="none" stroke="#cbe1ea" stroke-width="1.050"><rect x="5.800" y=".5" width="7.500" height="7.500" rx="1.500"/><path d="M4.500 4.400H2.900c-.8 0-1.500.7-1.500 1.500v5.400c0 .8.700 1.500 1.500 1.500h5.400c.8 0 1.500-.7 1.500-1.500V9.400"/></g></svg></div><div class="hc h2"><svg class="cp" viewBox="0 0 15 14"><g fill="none" stroke="#cbe1ea" stroke-width="1.050"><rect x="5.800" y=".5" width="7.500" height="7.500" rx="1.500"/><path d="M4.500 4.400H2.900c-.8 0-1.500.7-1.500 1.500v5.400c0 .8.700 1.500 1.500 1.500h5.400c.8 0 1.500-.7 1.500-1.500V9.400"/></g></svg></div><div class="hc h3"><svg class="cp" viewBox="0 0 15 14"><g fill="none" stroke="#cbe1ea" stroke-width="1.050"><rect x="5.800" y=".5" width="7.500" height="7.500" rx="1.500"/><path d="M4.500 4.400H2.900c-.8 0-1.500.7-1.500 1.500v5.400c0 .8.700 1.500 1.500 1.500h5.400c.8 0 1.500-.7 1.500-1.500V9.400"/></g></svg></div>
<div class="hv h1">67A44A38CC36BECD6E2E9C20C27FD9AD</div><div class="hv h2">3DD215876039EBEE144E18ECB84D8702697DB94B</div><div class="hv h3">80908A51E403EFD47B1D3689C3FB9447D3FB962D691D856B8B97581EEFC0C441</div>
</div>
<div class="row alt">
<svg class="wl" viewBox="0 0 26.200 26.200"><path fill="#c9dfe8" d="M0 3.400L11 1.900v10.400H0zM12.100 1.700L26.200 0v12.300H12.100zM0 13.700h11v10.500L0 22.600zM12.100 13.700h14.100v12.500l-14.100-1.800z"/></svg><div class="os">Windows 10 Professional 64bit</div><div class="dt">15 January 2025, 04:35</div>
<svg class="ck" viewBox="0 0 31 27"><path fill="none" stroke="#c9dfe8" stroke-width="6" stroke-linecap="round" stroke-linejoin="miter" d="M4 14.860l6.200 6.200L26.600 4.660"/></svg><svg class="fl" viewBox="0 0 20 25.700"><path fill="#c9dfe8" fill-rule="evenodd" d="M2.500 0h9.700L20 7.600v15.600a2.500 2.500 0 0 1-2.500 2.500h-15A2.500 2.500 0 0 1 0 23.200V2.500A2.500 2.500 0 0 1 2.500 0zM11.100 2.500v6.300h6.800z"/></svg>
<div class="verdict">Malicious activity</div>
<div class="sis"><svg class="si" viewBox="0 0 20 21"><path fill="#cbe1ea" fill-rule="evenodd" d="M19.200 1.050C17.500 1 15.500 1.200 14 1.640 13 2 12.300 2.500 11.600 3.100L7.770 6.840l-4.600.6L1.090 11.440 2.400 12.800l2.400-.6 2.100 1.900 1.170 1.500v3.300l1.180.1 4.150-2.500.6-4.200 4.500-4.400c.7-1.400 1-3.400.85-4.500.05-.9-.05-1.700-.15-2.350zM15.790 6.840a1.930 1.930 0 1 0-3.860 0 1.930 1.930 0 1 0 3.860 0z"/><path fill="#cbe1ea" d="M4.900 13.900C3.500 14.800 2.300 16 1.700 17L.05 20.950 3.900 19c1.100-.7 2.300-1.800 3-3z"/></svg><svg class="si" viewBox="0 0 20 21"><path fill="#cbe1ea" d="M6 4.700a3.800 3.800 0 0 1 7.600 0z"/><path fill="#cbe1ea" d="M4.200 5.800h11.700V11c0 4-1.900 7.500-5 8.200V8.600h-2v10.600C6 18.500 4.200 15 4.200 11z"/><path fill="none" stroke="#cbe1ea" stroke-width="1.300" d="M4.900 8.800L1.150 5.100M14.900 8.800l3.500-3.700M4.500 12.700H.1M15.500 12.700h3.800M5.600 16.200l-4 4.300M14.100 16.200l3.700 4.300"/></svg><svg class="si" viewBox="0 0 20 21"><path fill="#cbe1ea" d="M-.1 1h15v2.300H1.100v10.500H-.1z" opacity=".95"/><path fill="#cbe1ea" d="M2.100 4.900h15v2.200H3.300v10.800H2.100z" opacity=".95"/><path fill="#cbe1ea" fill-rule="evenodd" d="M4.900 8.600h14.800V21H4.900zM6.100 11v8.800h12.400V11z"/></svg></div>
<div class="nm" style="letter-spacing:0.707px">tmpq9wz79kh</div>
<div class="ds" style="letter-spacing:-0.220px">PE32 executable (console) Intel 80386, for MS Windows, 5 sectio...</div>
<div class="tags"><span class="tag t1" style="letter-spacing:-0.181px">lynx</span><span class="tag t2" style="letter-spacing:-0.163px">ransomware</span></div>
<div class="hl h1">MD5:</div><div class="hl h2">SHA1:</div><div class="hl h3">SHA256:</div>
<div class="hc h1"><svg class="cp" viewBox="0 0 15 14"><g fill="none" stroke="#cbe1ea" stroke-width="1.050"><rect x="5.800" y=".5" width="7.500" height="7.500" rx="1.500"/><path d="M4.500 4.400H2.900c-.8 0-1.500.7-1.500 1.500v5.400c0 .8.700 1.500 1.500 1.500h5.400c.8 0 1.500-.7 1.500-1.500V9.400"/></g></svg></div><div class="hc h2"><svg class="cp" viewBox="0 0 15 14"><g fill="none" stroke="#cbe1ea" stroke-width="1.050"><rect x="5.800" y=".5" width="7.500" height="7.500" rx="1.500"/><path d="M4.500 4.400H2.900c-.8 0-1.500.7-1.500 1.500v5.400c0 .8.700 1.500 1.500 1.500h5.400c.8 0 1.500-.7 1.500-1.500V9.400"/></g></svg></div><div class="hc h3"><svg class="cp" viewBox="0 0 15 14"><g fill="none" stroke="#cbe1ea" stroke-width="1.050"><rect x="5.800" y=".5" width="7.500" height="7.500" rx="1.500"/><path d="M4.500 4.400H2.900c-.8 0-1.500.7-1.500 1.500v5.400c0 .8.700 1.500 1.500 1.500h5.400c.8 0 1.500-.7 1.500-1.500V9.400"/></g></svg></div>
<div class="hv h1">7E851829EE37BC0CF65A268D1D1BAA7A</div><div class="hv h2">672553C79DB2A3859A8EA216804D4FF8D2DED538</div><div class="hv h3">EAA0E773EB593B0046452F420B6DB8A47178C09E6DB0FA68F6A2D42C3F48E3BC</div>
</div>
<div class="row">
<svg class="wl" viewBox="0 0 26.200 26.200"><path fill="#c9dfe8" d="M0 3.400L11 1.900v10.400H0zM12.100 1.700L26.200 0v12.300H12.100zM0 13.700h11v10.500L0 22.600zM12.100 13.700h14.100v12.500l-14.100-1.800z"/></svg><div class="os">Windows 10 Professional 64bit</div><div class="dt">15 January 2025, 04:20</div>
<svg class="ck" viewBox="0 0 31 27"><path fill="none" stroke="#c9dfe8" stroke-width="6" stroke-linecap="round" stroke-linejoin="miter" d="M4 14.860l6.200 6.200L26.600 4.660"/></svg><svg class="fl" viewBox="0 0 20 25.700"><path fill="#c9dfe8" fill-rule="evenodd" d="M2.500 0h9.700L20 7.600v15.600a2.500 2.500 0 0 1-2.500 2.500h-15A2.500 2.500 0 0 1 0 23.200V2.500A2.500 2.500 0 0 1 2.500 0zM11.100 2.500v6.300h6.800z"/></svg>
<div class="verdict">Malicious activity</div>
<div class="sis"><svg class="si" viewBox="0 0 20 21"><g transform="translate(9.900 11.750) scale(.413)"><mask id="u9" maskUnits="userSpaceOnUse" x="-30" y="-30" width="60" height="60"><rect x="-30" y="-30" width="60" height="60" fill="#fff"/><g fill="#000"><circle cx="0.00" cy="-15.00" r="11"/><circle cx="-12.99" cy="7.50" r="11"/><circle cx="12.99" cy="7.50" r="11"/><circle r="3.200"/><rect x="-.8" y="-16" width="1.600" height="16" transform="rotate(0)"/><rect x="-.8" y="-16" width="1.600" height="16" transform="rotate(120)"/><rect x="-.8" y="-16" width="1.600" height="16" transform="rotate(240)"/></g></mask><clipPath id="u10"><circle cx="0.00" cy="-15.00" r="9.300"/><circle cx="-12.99" cy="7.50" r="9.300"/><circle cx="12.99" cy="7.50" r="9.300"/></clipPath><g fill="#cbe1ea" mask="url(#u9)"><circle cx="0.00" cy="-11.00" r="15"/><circle cx="-9.53" cy="5.50" r="15"/><circle cx="9.53" cy="5.50" r="15"/></g><circle r="11.750" fill="none" stroke="#cbe1ea" stroke-width="3" clip-path="url(#u10)"/></g></svg><svg class="si" viewBox="0 0 20 21"><path fill="#cbe1ea" fill-rule="evenodd" d="M19.200 1.050C17.500 1 15.500 1.200 14 1.640 13 2 12.300 2.500 11.600 3.100L7.770 6.840l-4.600.6L1.090 11.440 2.400 12.800l2.400-.6 2.100 1.900 1.170 1.500v3.300l1.180.1 4.150-2.500.6-4.200 4.500-4.400c.7-1.400 1-3.400.85-4.500.05-.9-.05-1.700-.15-2.350zM15.790 6.840a1.930 1.930 0 1 0-3.860 0 1.930 1.930 0 1 0 3.860 0z"/><path fill="#cbe1ea" d="M4.900 13.900C3.500 14.800 2.300 16 1.700 17L.05 20.950 3.900 19c1.100-.7 2.300-1.800 3-3z"/></svg><svg class="si" viewBox="0 0 20 21"><path fill="#cbe1ea" d="M6 4.700a3.800 3.800 0 0 1 7.600 0z"/><path fill="#cbe1ea" d="M4.200 5.800h11.700V11c0 4-1.900 7.500-5 8.200V8.600h-2v10.600C6 18.500 4.200 15 4.200 11z"/><path fill="none" stroke="#cbe1ea" stroke-width="1.300" d="M4.900 8.800L1.150 5.100M14.900 8.800l3.500-3.700M4.500 12.700H.1M15.500 12.700h3.800M5.600 16.200l-4 4.300M14.100 16.200l3.700 4.300"/></svg><svg class="si" viewBox="0 0 20 21"><path fill="#cbe1ea" d="M-.1 1h15v2.300H1.100v10.500H-.1z" opacity=".95"/><path fill="#cbe1ea" d="M2.100 4.900h15v2.200H3.300v10.800H2.100z" opacity=".95"/><path fill="#cbe1ea" fill-rule="evenodd" d="M4.900 8.600h14.800V21H4.900zM6.100 11v8.800h12.400V11z"/></svg></div>
<div class="nm" style="letter-spacing:0.707px">tmpq9wz79kh</div>
<div class="ds" style="letter-spacing:-0.220px">PE32 executable (console) Intel 80386, for MS Windows, 5 sectio...</div>
<div class="tags"><span class="tag t1" style="letter-spacing:-0.181px">lynx</span><span class="tag t2" style="letter-spacing:-0.163px">ransomware</span></div>
<div class="hl h1">MD5:</div><div class="hl h2">SHA1:</div><div class="hl h3">SHA256:</div>
<div class="hc h1"><svg class="cp" viewBox="0 0 15 14"><g fill="none" stroke="#cbe1ea" stroke-width="1.050"><rect x="5.800" y=".5" width="7.500" height="7.500" rx="1.500"/><path d="M4.500 4.400H2.900c-.8 0-1.500.7-1.500 1.500v5.400c0 .8.700 1.500 1.500 1.500h5.400c.8 0 1.500-.7 1.500-1.500V9.400"/></g></svg></div><div class="hc h2"><svg class="cp" viewBox="0 0 15 14"><g fill="none" stroke="#cbe1ea" stroke-width="1.050"><rect x="5.800" y=".5" width="7.500" height="7.500" rx="1.500"/><path d="M4.500 4.400H2.900c-.8 0-1.500.7-1.500 1.500v5.400c0 .8.700 1.500 1.500 1.500h5.400c.8 0 1.500-.7 1.500-1.500V9.400"/></g></svg></div><div class="hc h3"><svg class="cp" viewBox="0 0 15 14"><g fill="none" stroke="#cbe1ea" stroke-width="1.050"><rect x="5.800" y=".5" width="7.500" height="7.500" rx="1.500"/><path d="M4.500 4.400H2.900c-.8 0-1.500.7-1.500 1.500v5.400c0 .8.700 1.500 1.500 1.500h5.400c.8 0 1.500-.7 1.500-1.500V9.400"/></g></svg></div>
<div class="hv h1">7E851829EE37BC0CF65A268D1D1BAA7A</div><div class="hv h2">672553C79DB2A3859A8EA216804D4FF8D2DED538</div><div class="hv h3">EAA0E773EB593B0046452F420B6DB8A47178C09E6DB0FA68F6A2D42C3F48E3BC</div>
</div>
<div class="row alt">
<svg class="wl" viewBox="0 0 26.200 26.200"><path fill="#c9dfe8" d="M0 3.400L11 1.900v10.400H0zM12.100 1.700L26.200 0v12.300H12.100zM0 13.700h11v10.500L0 22.600zM12.100 13.700h14.100v12.500l-14.100-1.800z"/></svg><div class="os">Windows 10 Professional 64bit</div><div class="dt">14 January 2025, 22:32</div>
<svg class="ck" viewBox="0 0 31 27"><path fill="none" stroke="#c9dfe8" stroke-width="6" stroke-linecap="round" stroke-linejoin="miter" d="M4 14.860l6.200 6.200L26.600 4.660"/></svg><svg class="fl" viewBox="0 0 20 25.700"><path fill="#c9dfe8" fill-rule="evenodd" d="M2.500 0h9.700L20 7.600v15.600a2.500 2.500 0 0 1-2.500 2.500h-15A2.500 2.500 0 0 1 0 23.200V2.500A2.500 2.500 0 0 1 2.500 0zM11.100 2.500v6.300h6.800z"/></svg>
<div class="verdict">Malicious activity</div>
<div class="sis"><svg class="si" viewBox="0 0 20 21"><g transform="translate(9.900 11.750) scale(.413)"><mask id="u11" maskUnits="userSpaceOnUse" x="-30" y="-30" width="60" height="60"><rect x="-30" y="-30" width="60" height="60" fill="#fff"/><g fill="#000"><circle cx="0.00" cy="-15.00" r="11"/><circle cx="-12.99" cy="7.50" r="11"/><circle cx="12.99" cy="7.50" r="11"/><circle r="3.200"/><rect x="-.8" y="-16" width="1.600" height="16" transform="rotate(0)"/><rect x="-.8" y="-16" width="1.600" height="16" transform="rotate(120)"/><rect x="-.8" y="-16" width="1.600" height="16" transform="rotate(240)"/></g></mask><clipPath id="u12"><circle cx="0.00" cy="-15.00" r="9.300"/><circle cx="-12.99" cy="7.50" r="9.300"/><circle cx="12.99" cy="7.50" r="9.300"/></clipPath><g fill="#cbe1ea" mask="url(#u11)"><circle cx="0.00" cy="-11.00" r="15"/><circle cx="-9.53" cy="5.50" r="15"/><circle cx="9.53" cy="5.50" r="15"/></g><circle r="11.750" fill="none" stroke="#cbe1ea" stroke-width="3" clip-path="url(#u12)"/></g></svg><svg class="si" viewBox="0 0 20 21"><path fill="#cbe1ea" fill-rule="evenodd" d="M19.200 1.050C17.500 1 15.500 1.200 14 1.640 13 2 12.300 2.500 11.600 3.100L7.770 6.840l-4.600.6L1.090 11.440 2.400 12.800l2.400-.6 2.100 1.900 1.170 1.500v3.300l1.180.1 4.150-2.500.6-4.200 4.500-4.400c.7-1.400 1-3.400.85-4.500.05-.9-.05-1.700-.15-2.350zM15.790 6.840a1.930 1.930 0 1 0-3.860 0 1.930 1.930 0 1 0 3.860 0z"/><path fill="#cbe1ea" d="M4.900 13.900C3.500 14.800 2.300 16 1.700 17L.05 20.950 3.900 19c1.100-.7 2.300-1.800 3-3z"/></svg><svg class="si" viewBox="0 0 20 21"><path fill="#cbe1ea" d="M6 4.700a3.800 3.800 0 0 1 7.600 0z"/><path fill="#cbe1ea" d="M4.200 5.800h11.700V11c0 4-1.900 7.500-5 8.200V8.600h-2v10.600C6 18.500 4.200 15 4.200 11z"/><path fill="none" stroke="#cbe1ea" stroke-width="1.300" d="M4.900 8.800L1.150 5.100M14.900 8.800l3.500-3.700M4.500 12.700H.1M15.500 12.700h3.800M5.600 16.200l-4 4.300M14.100 16.200l3.700 4.300"/></svg><svg class="si" viewBox="0 0 20 21"><path fill="#cbe1ea" d="M-.1 1h15v2.300H1.100v10.500H-.1z" opacity=".95"/><path fill="#cbe1ea" d="M2.100 4.900h15v2.200H3.300v10.800H2.100z" opacity=".95"/><path fill="#cbe1ea" fill-rule="evenodd" d="M4.900 8.600h14.800V21H4.900zM6.100 11v8.800h12.400V11z"/></svg></div>
<div class="nm" style="letter-spacing:0.275px">Lynx Ransomware</div>
<div class="ds" style="letter-spacing:-0.220px">PE32 executable (console) Intel 80386, for MS Windows, 5 sectio...</div>
<div class="tags"><span class="tag t1" style="letter-spacing:-0.181px">lynx</span><span class="tag t2" style="letter-spacing:-0.163px">ransomware</span></div>
<div class="hl h1">MD5:</div><div class="hl h2">SHA1:</div><div class="hl h3">SHA256:</div>
<div class="hc h1"><svg class="cp" viewBox="0 0 15 14"><g fill="none" stroke="#cbe1ea" stroke-width="1.050"><rect x="5.800" y=".5" width="7.500" height="7.500" rx="1.500"/><path d="M4.500 4.400H2.900c-.8 0-1.500.7-1.500 1.500v5.400c0 .8.700 1.500 1.500 1.500h5.400c.8 0 1.500-.7 1.500-1.500V9.400"/></g></svg></div><div class="hc h2"><svg class="cp" viewBox="0 0 15 14"><g fill="none" stroke="#cbe1ea" stroke-width="1.050"><rect x="5.800" y=".5" width="7.500" height="7.500" rx="1.500"/><path d="M4.500 4.400H2.900c-.8 0-1.500.7-1.500 1.500v5.400c0 .8.700 1.500 1.500 1.500h5.400c.8 0 1.500-.7 1.500-1.500V9.400"/></g></svg></div><div class="hc h3"><svg class="cp" viewBox="0 0 15 14"><g fill="none" stroke="#cbe1ea" stroke-width="1.050"><rect x="5.800" y=".5" width="7.500" height="7.500" rx="1.500"/><path d="M4.500 4.400H2.900c-.8 0-1.500.7-1.500 1.500v5.400c0 .8.700 1.500 1.500 1.500h5.400c.8 0 1.500-.7 1.500-1.500V9.400"/></g></svg></div>
<div class="hv h1">D972BBBB3EDB0E5AB5751B911F3DDA17</div><div class="hv h2">C632223F5F7A8A469BBF07EB017863BB83564B84</div><div class="hv h3">571F5DE9DD0D509ED7E5242B9B7473C2B2CBB36BA64D38B32122A0A337D6CF8B</div>
</div>
</div>
<div class="scroll"></div>
</body>
</html>
